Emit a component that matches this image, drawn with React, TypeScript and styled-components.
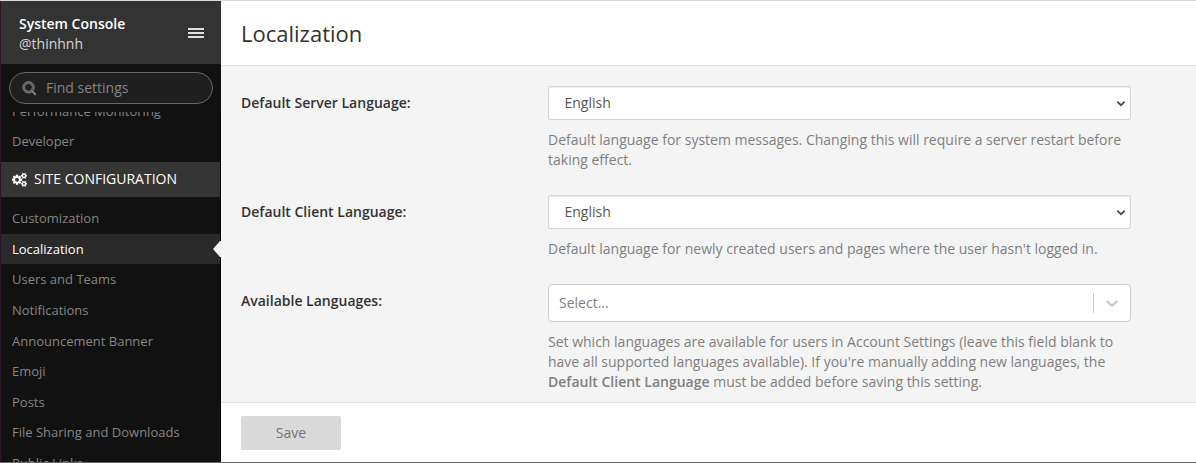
import React from "react";
import styled, { createGlobalStyle } from "styled-components";

const GlobalStyle = createGlobalStyle`
  *, *::before, *::after { box-sizing: border-box; }
  html, body { margin: 0; padding: 0; overflow: hidden; }
  body {
    font-family: "Open Sans", sans-serif;
    font-size: 14px;
    line-height: 20px;
    color: #333;
  }
`;

const Console = styled.div`
  display: flex;
  width: 100%;
  height: 100vh;
  border-top: 1px solid #d9d9d9;
  border-bottom: 1px solid #69676a;
  background: #f4f4f4;
`;

const Sidebar = styled.aside`
  display: flex;
  flex-direction: column;
  flex: 0 0 221px;
  border-left: 1px solid #2a1529;
  background: #111;
`;

const SidebarHeader = styled.header`
  display: flex;
  flex: 0 0 63px;
  align-items: center;
  justify-content: space-between;
  padding: 0 17px 0 18px;
  background: #333;
`;

const Account = styled.div`
  padding-top: 2px;
`;

const TeamName = styled.div`
  font-weight: 600;
  color: #fff;
`;

const UserName = styled.div`
  color: #d6d6d6;
`;

const MenuButton = styled.button`
  display: flex;
  flex-direction: column;
  gap: 2px;
  padding: 0;
  border: 0;
  background: none;
`;

const MenuBar = styled.span`
  width: 16px;
  height: 2px;
  background: #e0e0e0;
`;

const SearchBox = styled.label`
  display: flex;
  flex: 0 0 32px;
  align-items: center;
  gap: 9px;
  margin: 8px 8px 8px;
  padding-left: 12px;
  border: 1px solid #666;
  border-radius: 16px;
  background: #1f1f1f;
`;

const SearchInput = styled.input`
  width: 150px;
  padding: 0;
  border: 0;
  outline: 0;
  background: none;
  font: inherit;
  color: #ddd;
  &::placeholder { color: #848484; opacity: 1; }
`;

const Nav = styled.nav`
  flex: 1;
  min-height: 0;
  padding-right: 1px;
  overflow: hidden;
  box-shadow: inset -1px 0 0 #050505;
`;

const NavList = styled.ul<{ $scrolled?: boolean }>`
  list-style: none;
  margin: ${(p) => (p.$scrolled ? "-16.3px 0 5px" : "6.43px 0 0")};
  padding: 0;
`;

const NavItem = styled.li<{ $active?: boolean }>`
  position: relative;
  padding: 6px 11px;
  font-size: 13px;
  line-height: 18.57px;
  white-space: nowrap;
  color: ${(p) => (p.$active ? "#fff" : "#858585")};
  background: ${(p) => (p.$active ? "#2a2a2a" : "transparent")};
`;

const ActiveArrow = styled.svg`
  position: absolute;
  top: 7.5px;
  right: -1px;
`;

const SectionHeader = styled.h4`
  display: flex;
  align-items: center;
  gap: 7px;
  height: 35px;
  margin: 0;
  padding: 0 11px;
  background: #353535;
  font-size: 14px;
  font-weight: 400;
  color: #fff;
  text-transform: uppercase;
`;

const Main = styled.main`
  display: flex;
  flex: 1;
  flex-direction: column;
  min-width: 0;
`;

const PageHeader = styled.header`
  display: flex;
  flex: 0 0 65px;
  align-items: center;
  padding: 0 20px;
  border-bottom: 1px solid #e2e2e2;
  background: #fff;
`;

const PageTitle = styled.h1`
  margin: 0;
  font-size: 22px;
  font-weight: 400;
  line-height: 30px;
`;

const Settings = styled.form`
  display: flex;
  flex: 1;
  flex-direction: column;
  gap: 25px;
  min-height: 0;
  padding: 20px 65px 0 20px;
  overflow: hidden;
`;

const SettingRow = styled.div`
  display: grid;
  grid-template-columns: 307px 583px;
`;

const SettingLabel = styled.div`
  padding-top: 7px;
  font-weight: 600;
`;

const HelpText = styled.p`
  margin: 10px 0 0;
  color: #808080;
`;

const StrongText = styled.strong`
  font-weight: 600;
`;

const SelectWrap = styled.div`
  position: relative;
`;

const Select = styled.select`
  display: block;
  width: 100%;
  height: 34px;
  padding: 6px 24px 6px 15.5px;
  appearance: none;
  border: 1px solid #d5d5d5;
  border-radius: 2px;
  background-color: #fff;
  box-shadow: inset 0 1px 1px rgba(0, 0, 0, 0.075);
  font: inherit;
  color: #555;
`;

const SelectCaret = styled.svg`
  position: absolute;
  top: 14px;
  right: 5px;
  pointer-events: none;
`;

const MultiSelect = styled.div`
  display: flex;
  align-items: center;
  height: 38px;
  padding-left: 10px;
  border: 1px solid #ccc;
  border-radius: 4px;
  background: #fff;
`;

const Placeholder = styled.span`
  flex: 1;
  color: #808080;
`;

const Divider = styled.span`
  width: 1px;
  height: 20px;
  background: #ccc;
`;

const Indicator = styled.span`
  display: flex;
  padding: 8px;
  color: #ccc;
`;

const Footer = styled.footer`
  flex: 0 0 60px;
  padding: 13px 20px 12px;
  border-top: 1px solid #e2e2e2;
  background: #fff;
`;

const SaveButton = styled.button`
  display: block;
  width: 100px;
  height: 34px;
  padding: 0;
  border: 0;
  border-radius: 2px;
  background: #d9d9d9;
  font: inherit;
  color: #757575;
`;

const SMALL_COG =
  "v140q0 16-149 31-12 27-30 52 51 113 51 138 0 4-4 7-122 71-124 71-8 0-46-47t-52-68q-20 2-30 2t-30-2q-14 21-52 68t-46 47q-2 0-124-71-4-3-4-7 0-25 51-138-18-25-30-52-149-15-149-31v-140q0-16 149-31 13-29 30-52-51-113-51-138 0-4 4-7 4-2 35-20t59-34 30-16q8 0 46 46.5t52 67.5q20-2 30-2t30 2q51-71 92-112l6-2q4 0 124 70 4 3 4 7 0 25-51 138 17 23 30 52 149 15 149 31z";

const COGS =
  "M896 896q0-106-75-181t-181-75-181 75-75 181 75 181 181 75 181-75 75-181zm768 512q0-52-38-90t-90-38-90 38-38 90q0 53 37.5 90.5t90.5 37.5 90.5-37.5 37.5-90.5zm0-1024q0-52-38-90t-90-38-90 38-38 90q0 53 37.5 90.5t90.5 37.5 90.5-37.5 37.5-90.5zm-384 421v185q0 10-7 19.5t-16 10.5l-155 24q-11 35-32 76 34 48 90 115 7 11 7 20 0 12-7 19-23 30-82.5 89.5t-78.5 59.5q-11 0-21-7l-115-90q-37 19-77 31-11 108-23 155-7 24-30 24h-186q-11 0-20-7.5t-10-17.5l-23-153q-34-10-75-31l-118 89q-7 7-20 7-11 0-21-8-144-133-144-160 0-9 7-19 10-14 41-53t47-61q-23-44-35-82l-152-24q-10-1-17-9.5t-7-19.5v-185q0-10 7-19.5t16-10.5l155-24q11-35 32-76-34-48-90-115-7-11-7-20 0-12 7-20 22-30 82-89t79-59q11 0 21 7l115 90q34-18 77-32 11-108 23-154 7-24 30-24h186q11 0 20 7.5t10 17.5l23 153q34 10 75 31l118-89q8-7 20-7 11 0 21 8 144 133 144 160 0 8-7 19-12 16-42 54t-45 60q23 48 34 82l152 23q10 2 17 10.5t7 19.5zm640 533" +
  SMALL_COG +
  "m0-1024" +
  SMALL_COG;

const CogsIcon = () => (
  <svg width="15" height="16" viewBox="0 -128 1920 2048" fill="currentColor">
    <path d={COGS} transform="translate(0 96)" stroke="currentColor" strokeWidth="30" />
  </svg>
);

const SearchIcon = () => (
  <svg width="15" height="15" viewBox="0 0 15 15" fill="none">
    <circle cx="6.5" cy="6.3" r="4.8" stroke="#555" strokeWidth="2" />
    <circle cx="6.5" cy="6.3" r="5.7" stroke="#858585" strokeWidth="0.9" />
    <circle cx="6.5" cy="6.3" r="3.9" stroke="#858585" strokeWidth="0.8" />
    <path d="M10.3 10.3l3.4 3.4" stroke="#858585" strokeWidth="2" />
  </svg>
);

const ChevronIcon = () => (
  <svg width="20" height="20" viewBox="0 0 20 20" fill="currentColor">
    <path d="M4.516 7.548c0.436-0.446 1.043-0.481 1.576 0l3.908 3.747 3.908-3.747c0.533-0.481 1.141-0.446 1.574 0 0.436 0.445 0.408 1.197 0 1.615-0.406 0.418-4.695 4.502-4.695 4.502-0.217 0.223-0.502 0.335-0.787 0.335s-0.57-0.112-0.789-0.335c0 0-4.287-4.084-4.695-4.502s-0.436-1.17 0-1.615z" />
  </svg>
);

const LanguageSelect = () => (
  <SelectWrap>
    <Select>
      <option>English</option>
    </Select>
    <SelectCaret width="10" height="7" viewBox="0 0 10 7" fill="none">
      <path d="M1.3 1.6L5 5.2l3.7-3.6" stroke="#4a4a4a" strokeWidth="1.7" />
    </SelectCaret>
  </SelectWrap>
);

const siteItems = [
  "Customization",
  "Localization",
  "Users and Teams",
  "Notifications",
  "Announcement Banner",
  "Emoji",
  "Posts",
  "File Sharing and Downloads",
  "Public Links",
];

const ACTIVE_ITEM = "Localization";

export default function App() {
  return (
    <>
      <GlobalStyle />
      <Console>
        <Sidebar>
          <SidebarHeader>
            <Account>
              <TeamName>System Console</TeamName>
              <UserName>@thinhnh</UserName>
            </Account>
            <MenuButton aria-label="Menu">
              <MenuBar />
              <MenuBar />
              <MenuBar />
            </MenuButton>
          </SidebarHeader>
          <SearchBox>
            <SearchIcon />
            <SearchInput placeholder="Find settings" />
          </SearchBox>
          <Nav>
            <NavList $scrolled>
              <NavItem>Performance Monitoring</NavItem>
              <NavItem>Developer</NavItem>
            </NavList>
            <SectionHeader>
              <CogsIcon />
              Site Configuration
            </SectionHeader>
            <NavList>
              {siteItems.map((item) => (
                <NavItem key={item} $active={item === ACTIVE_ITEM}>
                  {item}
                  {item === ACTIVE_ITEM && (
                    <ActiveArrow width="8" height="16" viewBox="0 0 8 16">
                      <path d="M8 0H7L0 8l7 8h1z" fill="#f4f4f4" />
                    </ActiveArrow>
                  )}
                </NavItem>
              ))}
            </NavList>
          </Nav>
        </Sidebar>
        <Main>
          <PageHeader>
            <PageTitle>Localization</PageTitle>
          </PageHeader>
          <Settings>
            <SettingRow>
              <SettingLabel>Default Server Language:</SettingLabel>
              <div>
                <LanguageSelect />
                <HelpText>
                  Default language for system messages. Changing this will require a server restart
                  before taking effect.
                </HelpText>
              </div>
            </SettingRow>
            <SettingRow>
              <SettingLabel>Default Client Language:</SettingLabel>
              <div>
                <LanguageSelect />
                <HelpText>
                  Default language for newly created users and pages where the user hasn't logged in.
                </HelpText>
              </div>
            </SettingRow>
            <SettingRow>
              <SettingLabel>Available Languages:</SettingLabel>
              <div>
                <MultiSelect>
                  <Placeholder>Select...</Placeholder>
                  <Divider />
                  <Indicator>
                    <ChevronIcon />
                  </Indicator>
                </MultiSelect>
                <HelpText>
                  Set which languages are available for users in Account Settings (leave this field
                  blank to have all supported languages available). If you're manually adding new
                  languages, the <StrongText>Default Client Language</StrongText> must be added
                  before saving this setting.
                </HelpText>
              </div>
            </SettingRow>
          </Settings>
          <Footer>
            <SaveButton>Save</SaveButton>
          </Footer>
        </Main>
      </Console>
    </>
  );
}
